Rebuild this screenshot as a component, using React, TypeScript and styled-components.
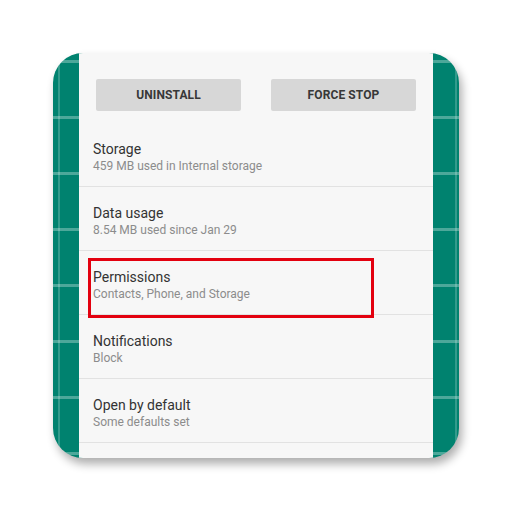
import React from "react";
import styled, { createGlobalStyle } from "styled-components";

const Global = createGlobalStyle`
  html, body { margin: 0; padding: 0; background: #ffffff; }
  body { font-family: Roboto, "Liberation Sans", Arial, sans-serif; }
`;

const Page = styled.div`
  width: 512px;
  height: 512px;
  display: flex;
  align-items: flex-start;
  justify-content: flex-start;
  padding: 53px 0 0 53px;
  box-sizing: border-box;
`;

const Card = styled.div`
  width: 406px;
  height: 405px;
  border-radius: 30px;
  overflow: hidden;
  display: grid;
  grid-template-columns: 26px 1fr 26px;
  box-shadow: 3px 6px 10px rgba(0, 0, 0, 0.32);
  background-color: #00826f;
  background-image:
    linear-gradient(to right, transparent 5px, rgba(255,255,255,0.2) 5px, rgba(255,255,255,0.2) 7px, transparent 7px),
    linear-gradient(to left, transparent 2px, rgba(255,255,255,0.2) 2px, rgba(255,255,255,0.2) 4px, transparent 4px),
    repeating-linear-gradient(to bottom, transparent 0px, transparent 7px, rgba(255,255,255,0.3) 7px, rgba(255,255,255,0.3) 10px, transparent 10px, transparent 56px);
`;

const Strip = styled.div``;

const Screen = styled.div`
  background: #f7f7f7;
  display: flex;
  flex-direction: column;
  padding-top: 26px;
`;

const ButtonRow = styled.div`
  display: flex;
  gap: 30px;
  padding: 0 17px;
  margin-bottom: 12px;
`;

const ActionButton = styled.div`
  flex: 1;
  height: 32px;
  background: #d7d7d7;
  border-radius: 2px;
  display: flex;
  align-items: center;
  justify-content: center;
  font-size: 12px;
  font-weight: 700;
  color: #383838;
  letter-spacing: 0.1px;
`;

const Row = styled.div`
  position: relative;
  height: 64px;
  box-sizing: border-box;
  border-bottom: 1.5px solid #e2e2e2;
  padding: 18px 0 0 14px;
  display: flex;
  flex-direction: column;
`;

const Title = styled.div`
  font-size: 14px;
  color: #333333;
  line-height: 17px;
`;

const Subtitle = styled.div`
  font-size: 12px;
  color: #8c8c8c;
  line-height: 17px;
`;

const Highlight = styled.div`
  position: absolute;
  left: 9px;
  top: 7px;
  width: 286px;
  height: 60px;
  box-sizing: border-box;
  border: 3px solid #e3000f;
`;

const items = [
  { title: "Storage", sub: "459 MB used in Internal storage" },
  { title: "Data usage", sub: "8.54 MB used since Jan 29" },
  { title: "Permissions", sub: "Contacts, Phone, and Storage", mark: true },
  { title: "Notifications", sub: "Block" },
  { title: "Open by default", sub: "Some defaults set" },
];

export default function App() {
  return (
    <>
      <Global />
      <Page>
        <Card>
          <Strip />
          <Screen>
            <ButtonRow>
              <ActionButton>UNINSTALL</ActionButton>
              <ActionButton>FORCE STOP</ActionButton>
            </ButtonRow>
            {items.map((it) => (
              <Row key={it.title}>
                <Title>{it.title}</Title>
                <Subtitle>{it.sub}</Subtitle>
                {it.mark && <Highlight />}
              </Row>
            ))}
          </Screen>
          <Strip />
        </Card>
      </Page>
    </>
  );
}
